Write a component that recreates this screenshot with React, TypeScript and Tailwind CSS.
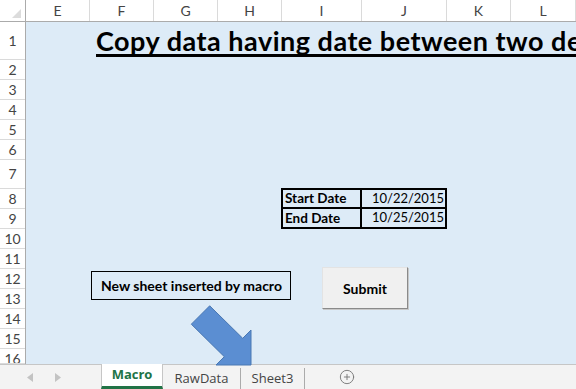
import React from 'react';
import { CirclePlus } from 'lucide-react';

const COLS = [
  { name: 'E', w: 64 },
  { name: 'F', w: 64 },
  { name: 'G', w: 64 },
  { name: 'H', w: 64 },
  { name: 'I', w: 80 },
  { name: 'J', w: 85 },
  { name: 'K', w: 64 },
  { name: 'L', w: 65 },
];

const ROWS = [38, 20, 20, 20, 20, 20, 29, 20, 20, 20, 20, 20, 20, 20, 20, 15];

const ColumnHeaders = () => (
  <div className="flex h-[22px] bg-white border-b border-[#ababab]">
    {/* Corner cell */}
    <div className="relative w-[26px] shrink-0 border-r border-[#ababab]">
      <svg className="absolute right-[4px] bottom-[3px]" width="9" height="9" viewBox="0 0 9 9">
        <polygon points="9,0 9,9 0,9" fill="#dcdcdc" />
      </svg>
    </div>
    {COLS.map((c) => (
      <div
        key={c.name}
        style={{ width: c.w }}
        className="shrink-0 flex items-center justify-center border-r border-[#dadada] text-[14px] text-[#444]"
      >
        {c.name}
      </div>
    ))}
  </div>
);

const RowHeaders = () => (
  <div className="w-[26px] shrink-0 bg-white border-r border-[#ababab] flex flex-col">
    {ROWS.map((h, i) => (
      <div
        key={i}
        style={{ height: h }}
        className={`shrink-0 flex justify-center border-b border-[#dadada] text-[14px] text-[#444] leading-none overflow-hidden ${
          i === ROWS.length - 1 ? 'items-start pt-[3px]' : 'items-center'
        }`}
      >
        {i + 1}
      </div>
    ))}
  </div>
);

const DateTable = () => (
  <div className="col-start-5 col-span-2 row-start-8 row-span-2 grid grid-cols-[79px_1fr] grid-rows-2 border-2 border-black -ml-px -mt-px text-[13.5px] text-black">
    <div className="flex items-center pl-[2px] font-bold border-r-2 border-b-2 border-black">Start Date</div>
    <div className="flex items-center justify-end pr-[1px] text-[13px] border-b-2 border-black">10/22/2015</div>
    <div className="flex items-center pl-[2px] font-bold border-r-2 border-black">End Date</div>
    <div className="flex items-center justify-end pr-[1px] text-[13px]">10/25/2015</div>
  </div>
);

const Sheet = () => (
  <div className="relative flex-1 bg-[#ddebf7] grid grid-cols-[64px_64px_64px_64px_80px_85px_64px_65px] grid-rows-[38px_20px_20px_20px_20px_20px_29px_20px_20px_20px_20px_20px_20px_20px_20px_15px] overflow-hidden">
    <div className="col-start-2 col-span-7 row-start-1 pl-[6px] pt-[3px] whitespace-nowrap text-[27px] tracking-[0.5px] font-bold leading-[32px] text-black underline decoration-[3px] underline-offset-[3px] [text-decoration-skip-ink:none]">
      Copy data having date between two defined dates
    </div>
    <DateTable />

    {/* Text box shape */}
    <div className="absolute left-[65px] top-[249px] w-[200px] h-[29px] border border-black flex items-center pl-[9px] text-[14px] font-bold text-black whitespace-nowrap">
      New sheet inserted by macro
    </div>

    {/* Submit button */}
    <div className="absolute left-[296px] top-[245px] w-[86px] h-[42px] bg-[#f0f0f0] border border-[#e3e3e3] border-r-[#8a8a8a] border-b-[#8a8a8a] shadow-[1px_1px_0_#c8c8c8] flex items-center justify-center text-[14px] font-bold text-black">
      Submit
    </div>
  </div>
);

const TabBar = () => (
  <div className="flex h-[25px] bg-[#f3f3f3] border-t border-[#c6c6c6] font-['Open_Sans',sans-serif] text-[13px]">
    <div className="w-[101px] shrink-0 flex items-center">
      <svg className="ml-[27px]" width="6" height="9" viewBox="0 0 6 9">
        <polygon points="6,0 6,9 0,4.5" fill="#c3c3c3" />
      </svg>
      <svg className="ml-[22px]" width="6" height="9" viewBox="0 0 6 9">
        <polygon points="0,0 0,9 6,4.5" fill="#c3c3c3" />
      </svg>
    </div>
    <div className="w-[62px] -mt-px bg-white border-x border-[#c6c6c6] border-b-[3px] border-b-[#217346] flex items-center justify-center font-bold text-[#217346]">
      Macro
    </div>
    <div className="w-[78px] flex items-center justify-center text-[#444] border-r border-[#ababab] mt-[3px]">
      RawData
    </div>
    <div className="w-[64px] flex items-center justify-center text-[#444] border-r border-[#ababab] mt-[3px]">
      Sheet3
    </div>
    <div className="flex items-center pl-[34px]">
      <CirclePlus size={16} strokeWidth={1.4} color="#777" />
    </div>
  </div>
);

export default function App() {
  return (
    <div className="relative w-[576px] h-[389px] overflow-hidden bg-white font-['Lato',sans-serif]">
      <ColumnHeaders />
      <div className="flex h-[342px]">
        <RowHeaders />
        <Sheet />
      </div>
      <TabBar />

      {/* Callout arrow */}
      <svg className="absolute left-0 top-0 pointer-events-none" width="576" height="389">
        <polygon
          points="209.7,305.8 242.7,338.3 251,330 251,365 216,365 224.3,356.7 191.3,324.2"
          fill="#5b8ed2"
          stroke="#4a78b3"
          strokeWidth="1"
        />
      </svg>
    </div>
  );
}
